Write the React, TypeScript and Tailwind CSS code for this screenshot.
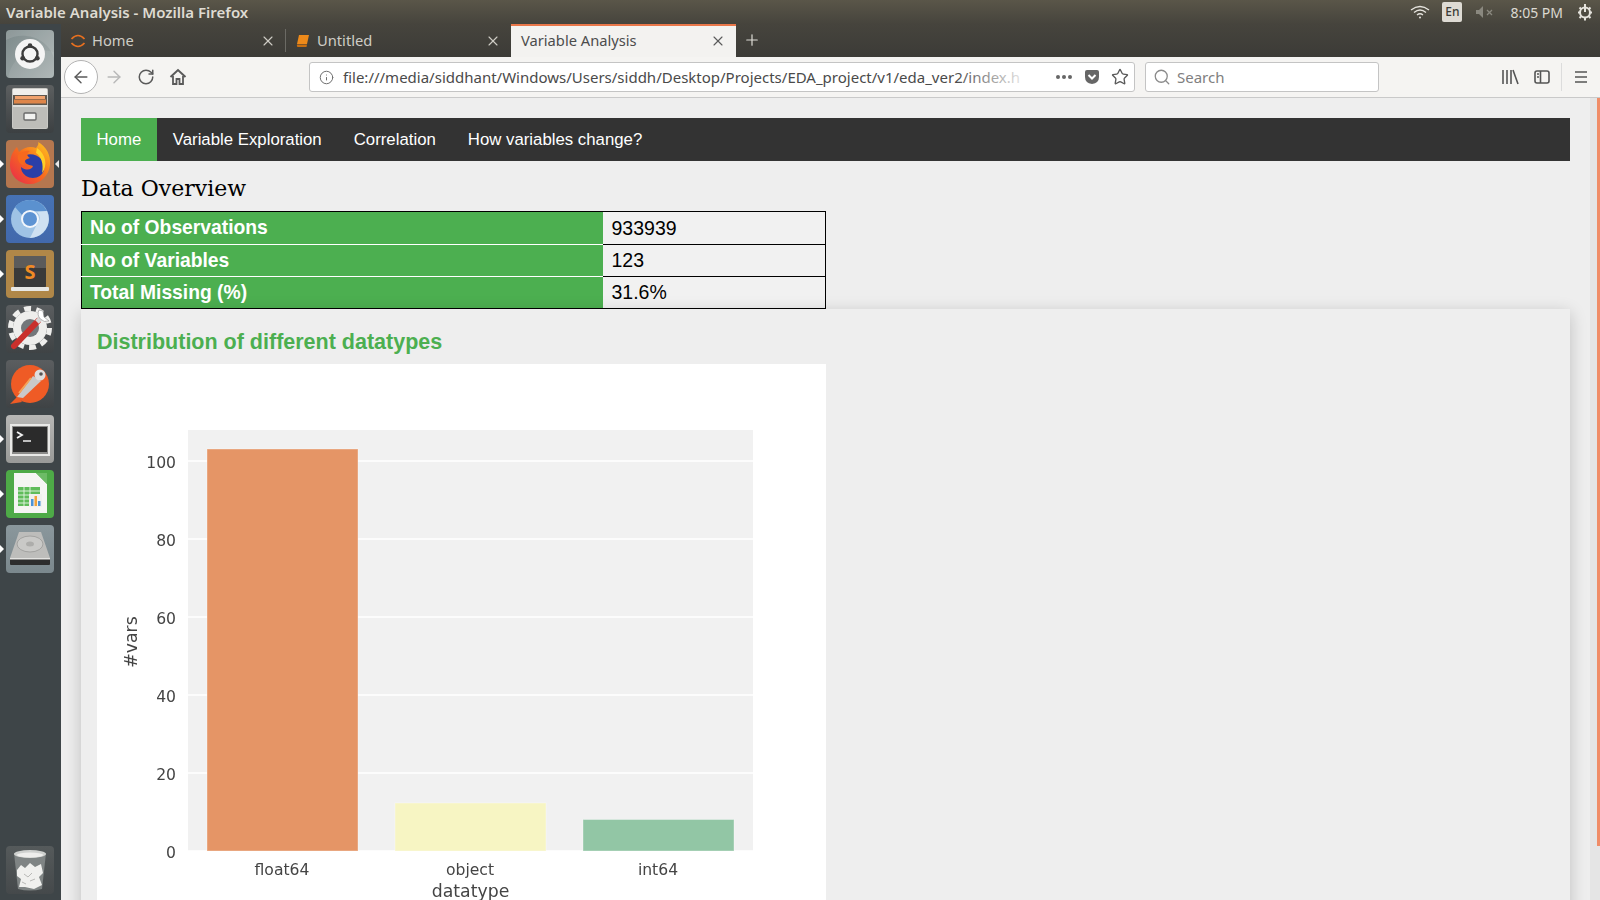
import type { ReactNode } from "react";
import { X, Plus, RotateCw, ArrowLeft, ArrowRight, Info, Star, Search } from "lucide-react";

const uiFont = "font-['Noto_Sans',sans-serif]";

const Tile = ({ bg, pips = false, rightPip = false, children }: { bg: string; pips?: boolean; rightPip?: boolean; children: ReactNode }) => (
  <div className="relative w-full h-[48px] pl-[6px]">
    {pips && <div className="absolute left-0 top-[20px] w-0 h-0 border-y-[4px] border-y-transparent border-l-[4px] border-l-white" />}
    {rightPip && <div className="absolute right-[2px] top-[20px] w-0 h-0 border-y-[4px] border-y-transparent border-r-[4px] border-r-[#e8e8e8]" />}
    <div className={`w-[48px] h-[48px] rounded-[4px] overflow-hidden ${bg}`}>
      <svg viewBox="0 0 48 48" width="48" height="48">
        {children}
      </svg>
    </div>
  </div>
);

const Launcher = () => (
  <aside className="w-[61px] shrink-0 bg-[#3e4548] flex flex-col gap-[7px] pt-[6px] pb-[6px]">
    <Tile bg="bg-gradient-to-br from-[#7d8a8b] to-[#a9b2b2]">
      <path d="M0 10 C18 0 42 8 48 28 V0 H0Z" fill="#ffffff" opacity="0.12" />
      <path d="M2 48 C6 26 24 16 48 22 V48Z" fill="#ffffff" opacity="0.08" />
      <circle cx="28" cy="24" r="15" fill="#f4f4f4" transform="translate(-4 0)" />
      <circle cx="24" cy="24" r="7.5" fill="none" stroke="#3b3b3b" strokeWidth="2.4" />
      <circle cx="24" cy="15.5" r="2.3" fill="#3b3b3b" />
      <circle cx="16.6" cy="28.2" r="2.3" fill="#3b3b3b" />
      <circle cx="31.4" cy="28.2" r="2.3" fill="#3b3b3b" />
    </Tile>
    <Tile bg="bg-gradient-to-b from-[#5c5f60] to-[#3c4042]">
      <rect x="6" y="3" width="36" height="41" rx="2" fill="#c9c9c5" />
      <rect x="7" y="4" width="34" height="7" fill="#f0efec" />
      <rect x="7" y="10" width="34" height="11" fill="#5f574e" />
      <rect x="9" y="11" width="30" height="3" fill="#f0a26d" />
      <rect x="8" y="14.5" width="32" height="4" fill="#de8549" />
      <rect x="7" y="20" width="34" height="23" fill="#bdbdb9" />
      <rect x="7" y="20" width="34" height="2" fill="#dededb" />
      <rect x="18" y="28" width="12" height="7" rx="1" fill="#f2f2f0" stroke="#6a6a6a" strokeWidth="1.4" />
    </Tile>
    <Tile bg="bg-[#b5774f]" pips rightPip>
      <defs>
        <linearGradient id="ffx" x1="0" y1="1" x2="1" y2="0">
          <stop offset="0" stopColor="#e8264f" />
          <stop offset="0.5" stopColor="#f7691e" />
          <stop offset="1" stopColor="#ffcb1f" />
        </linearGradient>
      </defs>
      <path d="M4 25 C4 15 8 10 11 7 L13 12 C18 7 25 6 30 8 C32 6 33 3 32 2 C40 6 45 15 44 25 C43 36 34 44 24 44 C13 44 4 36 4 25Z" fill="url(#ffx)" />
      <path d="M20 15 C30 12 40 20 38 30 C36 38 26 40 20 36 C16 33 15 30 15 27 C20 31 26 30 27 26 C23 25 19 24 19 21Z" fill="#2b3fa8" />
      <path d="M12 15 C15 12 20 10 24 11 C20 14 21 16 24 18 C20 19 17 21 18 25 C14 25 11 20 12 15Z" fill="#f7691e" />
      <path d="M31 8 C40 14 42 26 36 33 C38 24 35 16 30 13Z" fill="#ffcf26" />
    </Tile>
    <Tile bg="bg-gradient-to-b from-[#4672b4] to-[#4269ac]" pips>
      <circle cx="24" cy="24" r="19" fill="#9fc3e5" />
      <path d="M24 5 A19 19 0 0 1 41 16 L24 16 A8 8 0 0 0 16 20 L9 12 A19 19 0 0 1 24 5Z" fill="#5b91cf" />
      <path d="M41 16 A19 19 0 0 1 24 43 L31 29 A8 8 0 0 0 31 17Z" fill="#cfe1f2" />
      <circle cx="24" cy="24" r="9" fill="#f2f6fb" />
      <circle cx="24" cy="24" r="7" fill="#5d93d3" />
    </Tile>
    <Tile bg="bg-[#b08748]" pips>
      <rect x="8" y="6" width="32" height="32" rx="2" fill="#3a3a3a" />
      <rect x="8" y="6" width="32" height="12" fill="#5b5b5b" />
      <rect x="5" y="37" width="38" height="4" rx="1" fill="#e8e8e6" />
      <text x="24" y="29" textAnchor="middle" fontFamily="Noto Sans, sans-serif" fontWeight="700" fontSize="20" fill="#f08a24">S</text>
    </Tile>
    <Tile bg="bg-gradient-to-b from-[#5b5e60] to-[#3f4345]">
      <circle cx="24" cy="23" r="17" fill="#eeeeec" />
      <circle cx="24" cy="23" r="19.5" fill="none" stroke="#eeeeec" strokeWidth="5" strokeDasharray="7 5.2" />
      <circle cx="24" cy="23" r="9" fill="#73777a" />
      <path d="M8 41 L32 16" stroke="#c9302c" strokeWidth="6" strokeLinecap="round" />
      <path d="M31 17 L36 12" stroke="#d8d8d8" strokeWidth="5" />
      <path d="M33 5 A8 8 0 0 0 43 16 L38 12 L37 6Z" fill="#ffffff" stroke="#8a8a8a" strokeWidth="0.6" />
    </Tile>
    <Tile bg="bg-gradient-to-b from-[#5b5e60] to-[#3f4345]">
      <circle cx="24" cy="24" r="19" fill="#ef5b25" />
      <path d="M4 44 L12 36 L16 42 Z" fill="#ef5b25" />
      <path d="M11 37 L27 16 L35 21 L17 38Z" fill="#c9c9c9" />
      <path d="M13 33 L25 18" stroke="#f3a45a" strokeWidth="2" />
      <circle cx="34" cy="15" r="5.5" fill="#dedede" />
      <circle cx="35" cy="14" r="1.8" fill="#555" />
    </Tile>
    <Tile bg="bg-gradient-to-b from-[#b7b7b5] to-[#999a98]" pips>
      <rect x="4" y="9" width="40" height="32" fill="#e9e9e7" />
      <rect x="6" y="11" width="36" height="28" fill="#8b8b89" />
      <rect x="7" y="12" width="34" height="25" fill="#2b2b2b" />
      <path d="M11 17 L16 20 L11 23" fill="none" stroke="#f2f2f2" strokeWidth="1.8" />
      <path d="M17 26 H25" stroke="#f2f2f2" strokeWidth="1.6" />
    </Tile>
    <Tile bg="bg-[#4eaa47]" pips>
      <path d="M8 3 H30 L41 14 V43 H8Z" fill="#f5f5f3" />
      <path d="M30 3 L41 3 V14Z" fill="#6dbb66" />
      <rect x="12" y="17" width="22" height="19" fill="#5fbc5a" />
      <path d="M12 21 H34 M12 25 H34 M12 29 H34 M12 33 H34 M18 17 V36 M24 17 V36" stroke="#e7f5e6" strokeWidth="0.9" />
      <rect x="23" y="24" width="13" height="13" fill="#f0f0ee" />
      <rect x="25" y="29" width="2.5" height="7" fill="#4b93d8" />
      <rect x="28.5" y="26" width="2.5" height="10" fill="#f0a23a" />
      <rect x="32" y="31" width="2.5" height="5" fill="#4b93d8" />
    </Tile>
    <Tile bg="bg-gradient-to-b from-[#8a979c] to-[#7b888d]" pips>
      <path d="M13 7 H35 L44 33 H4Z" fill="#bdbdbb" />
      <ellipse cx="24" cy="19" rx="13" ry="8" fill="#c9c9c7" stroke="#a3a3a1" strokeWidth="1" />
      <ellipse cx="24" cy="19" rx="4" ry="2.5" fill="#adadab" />
      <rect x="4" y="33" width="40" height="7" rx="1" fill="#2d2d2d" />
      <rect x="4" y="33" width="40" height="1.5" fill="#e3e3e1" />
    </Tile>
    <div className="mt-auto">
      <Tile bg="bg-gradient-to-b from-[#555a5b] to-[#45494b]">
        <path d="M8 7 L12 43 Q24 46 36 43 L40 7Z" fill="#7f8484" />
        <ellipse cx="24" cy="8" rx="16" ry="4" fill="#cfd1cf" />
        <ellipse cx="24" cy="9" rx="13" ry="2.5" fill="#eeeeec" />
        <path d="M11 24 L15 19 L19 22 L24 17 L29 21 L35 18 L37 27 L33 31 L36 39 L28 43 L19 41 L13 41 L15 33 L11 30Z" fill="#f0f0ee" />
        <path d="M18 28 L22 31 L26 27 M24 35 L29 33 M16 36 L20 38" stroke="#b9b9b7" fill="none" />
      </Tile>
    </div>
  </aside>
);

const Tab = ({ label, active = false, icon, separator = false }: { label: string; active?: boolean; icon?: ReactNode; separator?: boolean }) => (
  <div className={`relative w-[225px] h-full flex items-center ${active ? "bg-[#f3f2f0] text-[#4c4c4c] border-t-2 border-[#e9774a] pb-[2px]" : "text-[#cfcdc6]"}`}>
    {icon && <div className="ml-[9px] w-[16px] h-[16px] flex items-center justify-center shrink-0">{icon}</div>}
    <span className={`text-[14.7px] ${active ? "ml-[10px]" : "ml-[6px]"}`}>{label}</span>
    <X className={`absolute right-[10px] ${active ? "top-[7px] text-[#5a5a5a]" : "top-[9px] text-[#cfcdc6]"}`} size={16} strokeWidth={1.7} />
    {separator && <div className="absolute right-0 top-[5px] h-[23px] w-px bg-[#6b6a64]" />}
  </div>
);

const TopBar = () => (
  <header className={`h-[24px] shrink-0 bg-gradient-to-b from-[#5a5649] to-[#46443d] flex items-center text-[#dfdbd2] ${uiFont}`}>
    <span className="ml-[6px] text-[15px] font-semibold">Variable Analysis - Mozilla Firefox</span>
    <div className="ml-auto flex items-center">
      <svg width="20" height="16" viewBox="0 0 20 16" fill="none" stroke="#e6e4de" strokeWidth="1.3">
        <path d="M1 6 Q10 -1 19 6" />
        <path d="M4 8.5 Q10 3.5 16 8.5" />
        <path d="M7 11 Q10 8.5 13 11" />
        <circle cx="10" cy="13.5" r="1" fill="#e6e4de" stroke="none" />
      </svg>
      <div className="ml-[12px] w-[20px] h-[20px] rounded-[2px] bg-[#dedbd4] text-[#3c3b37] text-[12px] font-medium flex items-center justify-center">En</div>
      <svg className="ml-[13px]" width="20" height="14" viewBox="0 0 20 14">
        <path d="M1 5 H4 L8 1 V13 L4 9 H1Z" fill="#8a887f" />
        <path d="M12 5 L17 10 M17 5 L12 10" stroke="#8a887f" strokeWidth="1.3" />
      </svg>
      <span className="ml-[15px] text-[14px] text-[#dcd9d1]">8:05 PM</span>
      <svg className="ml-[13px] mr-[6px]" width="18" height="18" viewBox="0 0 18 18" fill="none" stroke="#e6e4de">
        <circle cx="9" cy="9.5" r="5" strokeWidth="2" />
        <path d="M9 1 V9 M9 15 V17.5 M2 9.5 H4 M14 9.5 H16 M3.5 4.5 L5 6 M14.5 4.5 L13 6 M3.5 15 L5 13.5 M14.5 15 L13 13.5" strokeWidth="2" />
      </svg>
    </div>
  </header>
);

const BrowserChrome = () => (
  <div className={uiFont}>
    <div className="h-[33px] bg-gradient-to-b from-[#46443d] to-[#3c3b37] flex items-stretch">
      <Tab
        label="Home"
        separator
        icon={
          <svg width="16" height="16" viewBox="0 0 16 16" fill="none" stroke="#e8701f" strokeWidth="1.7">
            <path d="M1.5 6 Q8 -1 14.5 6" />
            <path d="M1.5 10 Q8 17 14.5 10" />
          </svg>
        }
      />
      <Tab
        label="Untitled"
        icon={
          <svg width="14" height="14" viewBox="0 0 14 14">
            <path d="M3 1 H13 L11 10 H1Z" fill="#ee8a1a" />
            <path d="M1 10.5 H11 L10.5 13 H1.5 Q0.5 12 1 10.5Z" fill="#c96f10" />
          </svg>
        }
      />
      <Tab label="Variable Analysis" active />
      <Plus className="ml-[7px] mt-[7px] text-[#dedcd6]" size={18} strokeWidth={1.6} />
    </div>
    <div className="h-[41px] bg-[#f5f4f2] border-b border-[#c9c9c9] flex items-center text-[#5a5a5a]">
      <div className="ml-[3px] w-[34px] h-[34px] rounded-full border border-[#b3b3b3] bg-white flex items-center justify-center">
        <ArrowLeft size={20} strokeWidth={1.7} />
      </div>
      <ArrowRight className="ml-[6px] text-[#b8b8b8]" size={20} strokeWidth={1.7} />
      <RotateCw className="ml-[13px]" size={18} strokeWidth={2} />
      <svg className="ml-[14px]" width="18" height="18" viewBox="0 0 18 18" fill="none" stroke="#5a5a5a" strokeWidth="2">
        <path d="M1.5 9 L9 2 L16.5 9" />
        <path d="M4 8 V16 H7.5 V11 H10.5 V16 H14 V8" strokeWidth="1.8" />
      </svg>
      <div className="ml-[122px] w-[826px] h-[30px] bg-white border border-[#c4c4c4] rounded-[3px] flex items-center relative">
        <Info className="ml-[9px] text-[#6f6f6f]" size={15} strokeWidth={1.6} />
        <span className="ml-[9px] whitespace-nowrap text-[15px] text-[#4a4a4a]">
          file:///media/siddhant/Windows/Users/siddh/Desktop/Projects/EDA_project/v1/eda_ver2/index.h
        </span>
        <div className="absolute left-[645px] top-[1px] w-[66px] h-[26px] bg-gradient-to-r from-transparent to-white/85" />
        <div className="absolute left-[746px] top-[12px] flex gap-[2px]">
          <div className="w-[4px] h-[4px] rounded-full bg-[#666]" />
          <div className="w-[4px] h-[4px] rounded-full bg-[#666]" />
          <div className="w-[4px] h-[4px] rounded-full bg-[#666]" />
        </div>
        <svg className="absolute left-[774px] top-[6px]" width="16" height="16" viewBox="0 0 16 16">
          <path d="M1 3 Q1 1 3 1 H13 Q15 1 15 3 V8 Q15 14 8 15 Q1 14 1 8Z" fill="#666" />
          <path d="M4.5 6 L8 9.5 L11.5 6" fill="none" stroke="#fff" strokeWidth="2" />
        </svg>
        <Star className="absolute left-[801px] top-[5px]" size={18} strokeWidth={1.8} />
      </div>
      <div className="ml-[10px] w-[234px] h-[30px] bg-white border border-[#c4c4c4] rounded-[3px] flex items-center">
        <Search className="ml-[7px] text-[#8a8a8a]" size={18} strokeWidth={1.7} />
        <span className="ml-[6px] text-[15px] text-[#808080]">Search</span>
      </div>
      <svg className="ml-[122px]" width="18" height="16" viewBox="0 0 18 16" stroke="#555" strokeWidth="1.6" fill="none">
        <path d="M2 1 V15 M6 1 V15 M10 1 V15 M12 1 L17 15" />
      </svg>
      <svg className="ml-[15px]" width="16" height="16" viewBox="0 0 16 16" stroke="#555" strokeWidth="1.6" fill="none">
        <rect x="1" y="2" width="14" height="12" rx="2" />
        <path d="M6.5 2 V14 M3 5 H5 M3 8 H5" />
      </svg>
      <div className="ml-[11px] w-px h-[28px] bg-[#dcdcdc]" />
      <svg className="ml-[12px]" width="14" height="14" viewBox="0 0 14 14" stroke="#555" strokeWidth="1.7">
        <path d="M1 2 H13 M1 7 H13 M1 12 H13" />
      </svg>
    </div>
  </div>
);

const Chart = () => {
  const ticks = [
    { label: "100", y: 461 },
    { label: "80", y: 539 },
    { label: "60", y: 617 },
    { label: "40", y: 695 },
    { label: "20", y: 773 },
    { label: "0", y: 851 },
  ];
  const bars = [
    { label: "float64", x: 207, y: 449, fill: "#e59566" },
    { label: "object", x: 395, y: 803, fill: "#f7f5c3" },
    { label: "int64", x: 583, y: 819.5, fill: "#92c6a5" },
  ];
  return (
    <svg className="block w-[729px] h-[600px] bg-white blur-[0.4px]" viewBox="97 364 729 600" fontFamily="DejaVu Sans, sans-serif" fill="#444444">
      <rect x="188" y="430" width="565" height="421" fill="#f1f1f1" />
      {ticks.map((t) => (
        <g key={t.label}>
          <line x1="188" x2="753" y1={t.y} y2={t.y} stroke="#ffffff" strokeWidth="1.5" />
          <text x="176" y={t.y + 7} textAnchor="end" fontSize="15.6">
            {t.label}
          </text>
        </g>
      ))}
      {bars.map((b) => (
        <g key={b.label}>
          <rect x={b.x} y={b.y} width="151" height={851 - b.y} fill={b.fill} stroke="#ffffff" strokeOpacity="0.35" />
          <text x={b.x + 75} y="875" textAnchor="middle" fontSize="15.6">
            {b.label}
          </text>
        </g>
      ))}
      <text x="470.5" y="897" textAnchor="middle" fontSize="17.3">
        datatype
      </text>
      <text transform="translate(137 642) rotate(-90)" textAnchor="middle" fontSize="17.3">
        #vars
      </text>
    </svg>
  );
};

const rows = [
  { name: "No of Observations", value: "933939" },
  { name: "No of Variables", value: "123" },
  { name: "Total Missing (%)", value: "31.6%" },
];

const Page = () => (
  <div className="flex-1 min-h-0 flex bg-[#eeeeee] font-['Liberation_Sans',sans-serif]">
    <main className="flex-1 overflow-hidden px-[20px] pt-[20px]">
      <nav className="h-[43px] bg-[#333333] flex text-[16.8px] text-white">
        <a className="px-[15.5px] flex items-center bg-[#4caf50]">Home</a>
        <a className="px-[16px] flex items-center">Variable Exploration</a>
        <a className="px-[16px] flex items-center">Correlation</a>
        <a className="px-[16px] flex items-center">How variables change?</a>
      </nav>
      <h2 className="h-[50px] pt-[14px] text-[22px] leading-[28px] text-black font-['DejaVu_Serif',serif]">Data Overview</h2>
      <table className="w-[745px] border-collapse border border-black text-[19.3px]">
        <tbody>
          {rows.map((r, i) => (
            <tr key={r.name} className={i === 0 ? "h-[33px]" : "h-[32px]"}>
              <td className={`w-[521px] px-[8px] py-0 pt-px bg-[#4caf50] text-white font-bold border-b ${i === 2 ? "border-black" : "border-white"}`}>{r.name}</td>
              <td className="pl-[9px] pr-[8px] py-0 pt-px bg-[#f1f1f1] text-[19.5px] text-black border-b border-black">{r.value}</td>
            </tr>
          ))}
        </tbody>
      </table>
      <section className="h-[700px] bg-[#eeeeee] px-[16px] pt-[20px] shadow-[0_4px_16px_rgba(0,0,0,0.2)]">
        <h3 className="h-[35px] text-[21.5px] leading-[26px] font-bold text-[#4caf50]">Distribution of different datatypes</h3>
        <Chart />
      </section>
    </main>
    <div className="w-[10px] shrink-0 bg-[#e5e5e5] flex justify-end items-start">
      <div className="w-[3px] h-[748px] bg-[#f08d68]" />
    </div>
  </div>
);

export default function App() {
  return (
    <div className="w-[1600px] h-[900px] overflow-hidden flex flex-col">
      <TopBar />
      <div className="flex-1 min-h-0 flex">
        <Launcher />
        <div className="flex-1 min-w-0 flex flex-col">
          <BrowserChrome />
          <Page />
        </div>
      </div>
    </div>
  );
}
